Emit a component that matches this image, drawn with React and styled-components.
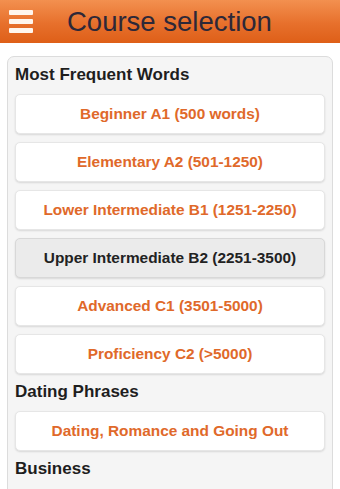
import styled, { createGlobalStyle } from "styled-components"

const Global = createGlobalStyle`
  html, body {
    margin: 0;
    padding: 0;
    background: #ffffff;
    font-family: "Liberation Sans", Arial, sans-serif;
  }
`

const Pagina = styled.div`
  width: 340px;
  height: 489px;
  overflow: hidden;
  background: #ffffff;
`

const Barra = styled.header`
  height: 43px;
  display: flex;
  align-items: center;
  background: linear-gradient(#f3904f, #e7702c 55%, #de5f18);
`

const Menu = styled.button`
  width: 24px;
  height: 23px;
  margin-left: 9px;
  padding: 0;
  border: none;
  background: transparent;
  display: flex;
  flex-direction: column;
  justify-content: space-between;
`

const Linea = styled.span`
  display: block;
  height: 5px;
  border-radius: 1px;
  background: #fff6ee;
`

const Titulo = styled.h1`
  margin: 0 0 0 34px;
  font-size: 27.5px;
  font-weight: normal;
  color: #2d2838;
  line-height: 1;
`

const Panel = styled.section`
  margin: 13px 7px 0 7px;
  padding: 8px 7px 0 7px;
  background: #f5f5f5;
  border: 1px solid #dcdcdc;
  border-radius: 7px;
  height: 440px;
`

const Grupo = styled.h2`
  margin: 0 0 9px 0;
  height: 20px;
  line-height: 20px;
  font-size: 17px;
  font-weight: bold;
  color: #1e1e1e;
`

const Opcion = styled.div`
  height: 38px;
  margin-bottom: 8px;
  display: flex;
  align-items: center;
  justify-content: center;
  border: 1px solid ${p => (p.$activa ? "#d8d8d8" : "#e6e6e6")};
  border-radius: 5px;
  background: ${p => (p.$activa ? "#ebebeb" : "#ffffff")};
  box-shadow: 0 1px 2px rgba(0, 0, 0, 0.12);
  font-size: 15.4px;
  font-weight: bold;
  color: ${p => (p.$activa ? "#222222" : "#e0692a")};
`

const grupos = [
  {
    nombre: "Most Frequent Words",
    cursos: [
      "Beginner A1 (500 words)",
      "Elementary A2 (501-1250)",
      "Lower Intermediate B1 (1251-2250)",
      "Upper Intermediate B2 (2251-3500)",
      "Advanced C1 (3501-5000)",
      "Proficiency C2 (>5000)",
    ],
  },
  { nombre: "Dating Phrases", cursos: ["Dating, Romance and Going Out"] },
  { nombre: "Business", cursos: [] },
]

const activo = "Upper Intermediate B2 (2251-3500)"

export default function App() {
  return (
    <Pagina>
      <Global />
      <Barra>
        <Menu aria-label="menu">
          <Linea />
          <Linea />
          <Linea />
        </Menu>
        <Titulo>Course selection</Titulo>
      </Barra>
      <Panel>
        {grupos.map(g => (
          <div key={g.nombre}>
            <Grupo>{g.nombre}</Grupo>
            {g.cursos.map(c => (
              <Opcion key={c} $activa={c === activo}>{c}</Opcion>
            ))}
          </div>
        ))}
      </Panel>
    </Pagina>
  )
}
